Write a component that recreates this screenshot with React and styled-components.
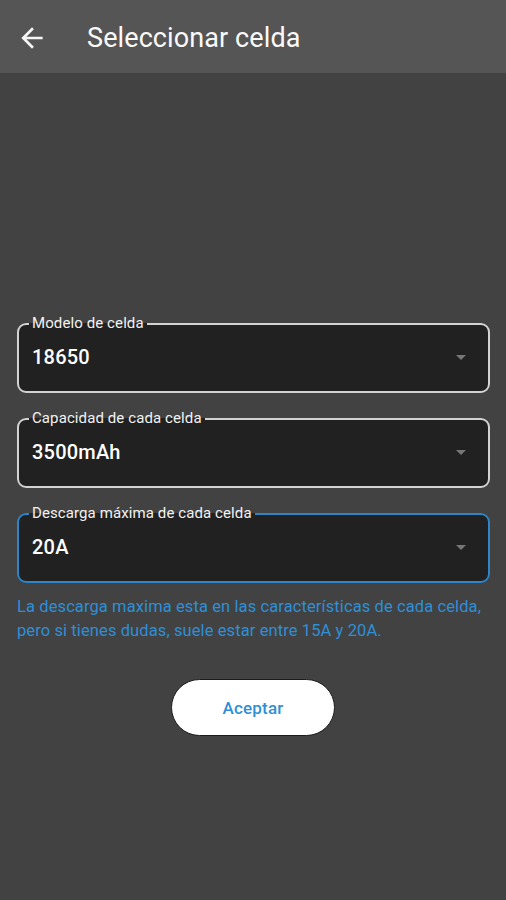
import React from "react";
import styled, { createGlobalStyle } from "styled-components";

const Global = createGlobalStyle`
  html, body { margin: 0; padding: 0; background: #424242; }
  body { font-family: Roboto, "Noto Sans", Arial, sans-serif; }
  #root { min-height: 900px; }
`;

const Page = styled.div`
  width: 506px;
  height: 900px;
  background: #424242;
  display: flex;
  flex-direction: column;
`;

const AppBar = styled.header`
  height: 73px;
  background: #555555;
  display: flex;
  align-items: center;
  padding-left: 16px;
  box-sizing: border-box;
  color: #fafafa;
  flex-shrink: 0;
`;

const BackButton = styled.button`
  background: none;
  border: none;
  padding: 0;
  width: 32px;
  height: 32px;
  display: flex;
  align-items: center;
  justify-content: center;
  color: #f5f5f5;
  margin-right: 39px;
  margin-top: 2px;
`;

const Title = styled.h1`
  margin: 0;
  font-size: 27px;
  font-weight: 400;
  letter-spacing: 0.1px;
  margin-top: 2px;
`;

const Body = styled.main`
  padding: 243px 16px 0 17px;
  display: flex;
  flex-direction: column;
  gap: 18px;
`;

const Field = styled.fieldset`
  margin: 0;
  border: 2px solid ${(p) => (p.$focused ? "#2e86c8" : "#d2d2d2")};
  border-radius: 9px;
  background: #212121;
  padding: 0 12px 0 10px;
  min-width: 0;
`;

const Legend = styled.legend`
  padding: 0 3px;
  font-size: 15px;
  color: #f2f2f2;
  line-height: 15px;
  letter-spacing: 0.1px;
`;

const Inner = styled.div`
  height: 60px;
  box-sizing: border-box;
  padding-bottom: 8px;
  display: flex;
  align-items: center;
  justify-content: space-between;
`;

const Value = styled.span`
  font-size: 20px;
  font-weight: 500;
  color: #ffffff;
  padding-left: 3px;
  letter-spacing: 0.2px;
`;

const Arrow = styled.span`
  width: 0;
  height: 0;
  border-left: 5px solid transparent;
  border-right: 5px solid transparent;
  border-top: 5px solid #777777;
  margin-right: 10px;
`;

const Helper = styled.p`
  margin: -6px 0 0 0;
  font-size: 16.5px;
  line-height: 24px;
  color: #2f8fd6;
  letter-spacing: 0.1px;
`;

const ButtonRow = styled.div`
  display: flex;
  justify-content: center;
  margin-top: 18px;
  padding-right: 1px;
`;

const Accept = styled.button`
  width: 164px;
  height: 57px;
  border-radius: 29px;
  background: #ffffff;
  border: 1px solid #1c1c1c;
  color: #2f8fd6;
  font-family: Roboto, "Noto Sans", Arial, sans-serif;
  font-size: 17px;
  font-weight: 500;
  letter-spacing: 0.2px;
`;

const fields = [
  { label: "Modelo de celda", value: "18650" },
  { label: "Capacidad de cada celda", value: "3500mAh" },
  { label: "Descarga máxima de cada celda", value: "20A", focused: true },
];

export default function App() {
  return (
    <Page>
      <Global />
      <AppBar>
        <BackButton aria-label="Atrás">
          <svg width="32" height="32" viewBox="0 0 24 24">
            <path
              d="M20 11H7.83l5.59-5.59L12 4l-8 8 8 8 1.41-1.41L7.83 13H20v-2z"
              fill="currentColor"
            />
          </svg>
        </BackButton>
        <Title>Seleccionar celda</Title>
      </AppBar>
      <Body>
        {fields.map((f) => (
          <Field key={f.label} $focused={f.focused}>
            <Legend>{f.label}</Legend>
            <Inner>
              <Value>{f.value}</Value>
              <Arrow />
            </Inner>
          </Field>
        ))}
        <Helper>
          La descarga maxima esta en las características de cada celda, pero si
          tienes dudas, suele estar entre 15A y 20A.
        </Helper>
        <ButtonRow>
          <Accept>Aceptar</Accept>
        </ButtonRow>
      </Body>
    </Page>
  );
}
